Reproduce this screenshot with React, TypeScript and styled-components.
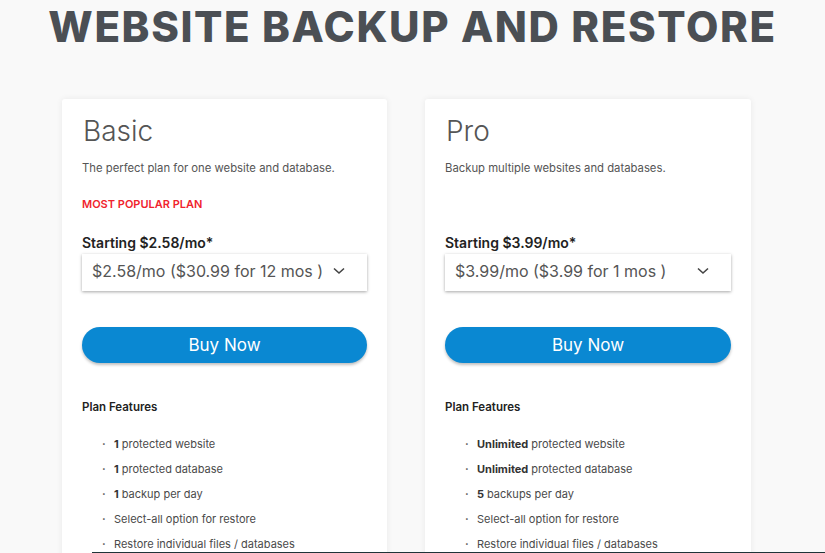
import React from "react";
import styled, { createGlobalStyle } from "styled-components";

const Global = createGlobalStyle`
  html, body { margin: 0; padding: 0; background: #f9f9f9; }
  body { font-family: Inter, "Open Sans", sans-serif; color: #555; overflow: hidden; }
`;

const Page = styled.div`
  width: 825px;
  height: 553px;
  overflow: hidden;
  position: relative;
`;

const Title = styled.h1`
  margin: 0;
  padding-top: 6px;
  text-align: center;
  font-family: Inter, sans-serif;
  font-weight: 800;
  font-size: 42px;
  line-height: 42px;
  letter-spacing: 1.6px;
  color: #4b4f54;
`;

const Cards = styled.div`
  display: grid;
  grid-template-columns: 325px 326px;
  column-gap: 38px;
  padding-left: 62px;
  margin-top: 51px;
`;

const Card = styled.div`
  background: #fff;
  border-radius: 3px;
  box-shadow: 0 0 6px rgba(0, 0, 0, 0.07);
  padding: 14px 20px 40px 20px;
  height: 600px;
  box-sizing: border-box;
`;

const PlanName = styled.div`
  font-weight: 300;
  font-size: 28px;
  line-height: 36px;
  color: #555;
  margin-left: 1px;
`;

const Description = styled.div`
  font-size: 11.3px;
  line-height: 16px;
  margin-top: 11px;
  color: #555;
`;

const Popular = styled.div<{ $hidden?: boolean }>`
  font-size: 11px;
  font-weight: 600;
  line-height: 16px;
  color: #f0232d;
  margin-top: 20px;
  visibility: ${(p) => (p.$hidden ? "hidden" : "visible")};
`;

const Starting = styled.div`
  font-size: 14px;
  font-weight: 600;
  line-height: 18px;
  color: #222;
  margin-top: 22px;
`;

const Select = styled.div`
  margin-top: 2px;
  height: 37px;
  box-sizing: border-box;
  background: #fff;
  box-shadow: 0 1px 3px rgba(0, 0, 0, 0.35);
  display: flex;
  align-items: center;
  justify-content: space-between;
  padding: 0 22px 4px 10px;
  font-size: 16px;
  color: #555;
`;

const BuyButton = styled.button`
  display: block;
  width: 100%;
  margin-top: 36px;
  height: 36px;
  border: none;
  border-radius: 18px;
  background: #0a88d2;
  color: #fff;
  font-family: Inter, sans-serif;
  font-size: 17px;
  padding-bottom: 2px;
  box-shadow: 0 2px 3px rgba(0, 0, 0, 0.25);
  cursor: pointer;
`;

const FeaturesTitle = styled.div`
  font-size: 11.5px;
  font-weight: 600;
  color: #222;
  margin-top: 36px;
  line-height: 16px;
`;

const FeatureList = styled.ul`
  list-style: none;
  margin: 17px 0 0 0;
  padding: 0 0 0 20px;
`;

const Feature = styled.li`
  display: flex;
  align-items: center;
  font-size: 11px;
  line-height: 25px;
  color: #4a4a4a;
  &::before {
    content: "·";
    width: 12px;
    color: #555;
    font-weight: 700;
  }
  b { font-weight: 700; color: #333; margin-right: 3px; }
`;

const FooterEdge = styled.div`
  position: absolute;
  left: 92px;
  right: 0;
  bottom: 0;
  height: 1px;
  background: #1f3438;
`;

const Chevron = () => (
  <svg width="12" height="8" viewBox="0 0 12 8">
    <path d="M1 1.5 L6 6 L11 1.5" fill="none" stroke="#444" strokeWidth="1.6" />
  </svg>
);

type Plan = {
  name: string;
  desc: string;
  popular: boolean;
  starting: string;
  option: string;
  features: [string, string][];
};

const plans: Plan[] = [
  {
    name: "Basic",
    desc: "The perfect plan for one website and database.",
    popular: true,
    starting: "Starting $2.58/mo*",
    option: "$2.58/mo ($30.99 for 12 mos )",
    features: [
      ["1", "protected website"],
      ["1", "protected database"],
      ["1", "backup per day"],
      ["", "Select-all option for restore"],
      ["", "Restore individual files / databases"],
    ],
  },
  {
    name: "Pro",
    desc: "Backup multiple websites and databases.",
    popular: false,
    starting: "Starting $3.99/mo*",
    option: "$3.99/mo ($3.99 for 1 mos )",
    features: [
      ["Unlimited", "protected website"],
      ["Unlimited", "protected database"],
      ["5", "backups per day"],
      ["", "Select-all option for restore"],
      ["", "Restore individual files / databases"],
    ],
  },
];

export default function App() {
  return (
    <Page>
      <Global />
      <Title>WEBSITE BACKUP AND RESTORE</Title>
      <Cards>
        {plans.map((p) => (
          <Card key={p.name}>
            <PlanName>{p.name}</PlanName>
            <Description>{p.desc}</Description>
            <Popular $hidden={!p.popular}>MOST POPULAR PLAN</Popular>
            <Starting>{p.starting}</Starting>
            <Select>
              <span>{p.option}</span>
              <Chevron />
            </Select>
            <BuyButton>Buy Now</BuyButton>
            <FeaturesTitle>Plan Features</FeaturesTitle>
            <FeatureList>
              {p.features.map(([b, t], i) => (
                <Feature key={i}>
                  <span>
                    {b && <b>{b}</b>}
                    {t}
                  </span>
                </Feature>
              ))}
            </FeatureList>
          </Card>
        ))}
      </Cards>
      <FooterEdge />
    </Page>
  );
}
